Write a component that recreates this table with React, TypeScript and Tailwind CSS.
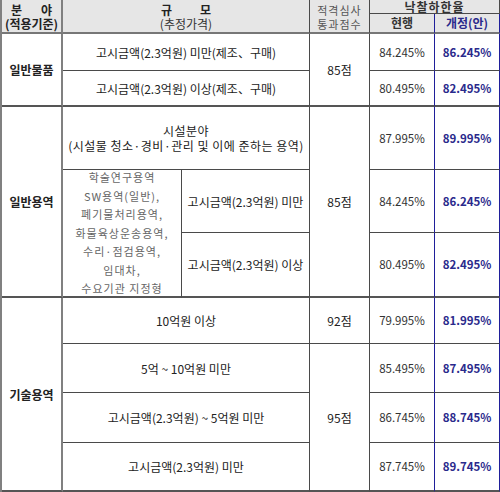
import React from "react";

const base =
  "flex flex-col items-center justify-center text-center border-r border-b border-[#4a4a4a]";

function Cell({ className = "", children }: { className?: string; children?: React.ReactNode }) {
  return <div className={`${base} ${className}`}>{children}</div>;
}

const hdr = "bg-[#e6e6e6] border-b-2 border-b-[#777] leading-[14px]";
const pct = "text-[11.5px] text-[#333]";
const blue = "text-[11.5px] font-bold text-[#2a2a8c] border-r-[#1f1f9a]";
const curBorder = "border-r-[#1f1f9a]";

export default function App() {
  return (
    <div className="w-[500px] h-[492px] bg-white font-['Noto_Sans_CJK_KR',sans-serif] text-[#222] leading-tight">
      <div className="grid grid-cols-[61px_119px_128px_60px_65px_65px] grid-rows-[14px_20px_37px_36px_63px_63px_65px_46px_49px_50px_49px] border-l-2 border-[#808080] h-[492px]">
        {/* header */}
        <Cell className={`row-span-2 ${hdr} border-r-2 border-r-[#808080] font-bold text-[12px] pt-[2px]`}>
          <span className="flex w-full justify-between px-[9px]">
            <span>분</span>
            <span>야</span>
          </span>
          <span>(적용기준)</span>
        </Cell>
        <Cell className={`col-span-2 row-span-2 ${hdr} font-bold text-[12px] pt-[2px]`}>
          <span className="flex w-[50px] justify-between">
            <span>규</span>
            <span>모</span>
          </span>
          <span className="font-normal text-[#333]">(추정가격)</span>
        </Cell>
        <Cell className={`row-span-2 ${hdr} text-[11px] text-[#555] tracking-[1px] pt-[2px]`}>
          <span>적격심사</span>
          <span>통과점수</span>
        </Cell>
        <Cell className={`col-span-2 bg-[#e6e6e6] font-bold text-[12px] text-[#333] tracking-[1px] leading-[14px]`}>
          낙찰하한율
        </Cell>
        <Cell className={`${hdr} ${curBorder} font-bold text-[12px] text-[#333]`}>현행</Cell>
        <Cell className={`${hdr} border-r-[#1f1f9a] font-bold text-[12px] text-[#2a2a8c]`}>개정(안)</Cell>

        {/* 일반물품 */}
        <Cell className="row-span-2 border-r-2 border-r-[#808080] border-b-2 border-b-[#555] font-bold text-[12px]">
          일반물품
        </Cell>
        <Cell className="col-span-2 text-[12px]">고시금액(2.3억원) 미만(제조、구매)</Cell>
        <Cell className="row-span-2 border-b-2 border-b-[#555] text-[12px]">85점</Cell>
        <Cell className={`${pct} ${curBorder}`}>84.245%</Cell>
        <Cell className={blue}>86.245%</Cell>
        <Cell className="col-span-2 border-b-2 border-b-[#555] text-[12px]">고시금액(2.3억원) 이상(제조、구매)</Cell>
        <Cell className={`${pct} ${curBorder} border-b-2 border-b-[#555]`}>80.495%</Cell>
        <Cell className={`${blue} border-b-2 border-b-[#555]`}>82.495%</Cell>

        {/* 일반용역 */}
        <Cell className="row-span-3 border-r-2 border-r-[#808080] border-b-2 border-b-[#555] font-bold text-[12px]">
          일반용역
        </Cell>
        <Cell className="col-span-2 text-[12px] tracking-[0.5px] leading-[15px]">
          <span>시설분야</span>
          <span>(시설물 청소·경비·관리 및 이에 준하는 용역)</span>
        </Cell>
        <Cell className="row-span-3 border-b-2 border-b-[#555] text-[12px]">85점</Cell>
        <Cell className={`${pct} ${curBorder}`}>87.995%</Cell>
        <Cell className={blue}>89.995%</Cell>
        <Cell className="row-span-2 border-b-2 border-b-[#555] text-[11px] text-[#666] leading-[18.5px] tracking-[1px] whitespace-nowrap">
          <span>학술연구용역</span>
          <span>SW용역(일반),</span>
          <span>폐기물처리용역,</span>
          <span>화물육상운송용역,</span>
          <span>수리·점검용역,</span>
          <span>임대차,</span>
          <span>수요기관 지정형</span>
        </Cell>
        <Cell className="text-[12px]">고시금액(2.3억원) 미만</Cell>
        <Cell className={`${pct} ${curBorder}`}>84.245%</Cell>
        <Cell className={blue}>86.245%</Cell>
        <Cell className="border-b-2 border-b-[#555] text-[12px]">고시금액(2.3억원) 이상</Cell>
        <Cell className={`${pct} ${curBorder} border-b-2 border-b-[#555]`}>80.495%</Cell>
        <Cell className={`${blue} border-b-2 border-b-[#555]`}>82.495%</Cell>

        {/* 기술용역 */}
        <Cell className="row-span-4 border-r-2 border-r-[#808080] border-b-2 border-b-[#555] font-bold text-[12px]">
          기술용역
        </Cell>
        <Cell className="col-span-2 text-[12px]">10억원 이상</Cell>
        <Cell className="text-[12px]">92점</Cell>
        <Cell className={`${pct} ${curBorder}`}>79.995%</Cell>
        <Cell className={blue}>81.995%</Cell>
        <Cell className="col-span-2 text-[12px]">5억 ~ 10억원 미만</Cell>
        <Cell className="row-span-3 border-b-2 border-b-[#555] text-[12px]">95점</Cell>
        <Cell className={`${pct} ${curBorder}`}>85.495%</Cell>
        <Cell className={blue}>87.495%</Cell>
        <Cell className="col-span-2 text-[12px]">고시금액(2.3억원) ~ 5억원 미만</Cell>
        <Cell className={`${pct} ${curBorder}`}>86.745%</Cell>
        <Cell className={blue}>88.745%</Cell>
        <Cell className="col-span-2 border-b-2 border-b-[#555] text-[12px]">고시금액(2.3억원) 미만</Cell>
        <Cell className={`${pct} ${curBorder} border-b-2 border-b-[#555]`}>87.745%</Cell>
        <Cell className={`${blue} border-b-2 border-b-[#555]`}>89.745%</Cell>
      </div>
    </div>
  );
}
